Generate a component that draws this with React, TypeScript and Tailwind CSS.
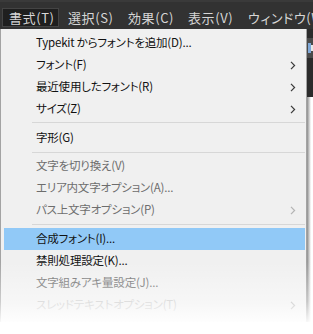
import React from 'react'

type Item = {
  label: string
  disabled?: boolean
  faint?: boolean
  sub?: boolean
  active?: boolean
}

const barItems = ['書式(T)', '選択(S)', '効果(C)', '表示(V)', 'ウィンドウ(W)']

function Chevron({ color }: { color: string }) {
  return (
    <svg width="6" height="9" viewBox="0 0 6 9" className="shrink-0">
      <path d="M1 0.8 L4.6 4.5 L1 8.2" fill="none" stroke={color} strokeWidth="1.2" />
    </svg>
  )
}

function Row({ item }: { item: Item }) {
  const color = item.faint ? 'text-[#c4c4c4]' : item.disabled ? 'text-[#6d6d6d]' : 'text-[#111111]'
  return (
    <div
      className={`h-[22px] flex items-center pl-[32px] pr-[9px] ${item.active ? 'bg-[#91c9f7]' : ''}`}
    >
      <span className={`flex-1 text-[11.5px] tracking-[-0.2px] leading-none whitespace-nowrap ${color}`}>
        {item.label}
      </span>
      {item.sub && <Chevron color={item.faint || item.disabled ? '#b4b4b4' : '#3a3a3a'} />}
    </div>
  )
}

function Separator({ top, bottom }: { top: string; bottom: string }) {
  return <div className={`${top} ${bottom} ml-[28px] h-px bg-[#d7d7d7]`} />
}

export default function App() {
  return (
    <div className="relative w-[313px] h-[334px] overflow-hidden bg-white font-['Noto_Sans_CJK_JP','Noto_Sans',sans-serif] [font-feature-settings:'palt']">
      {/* menu bar */}
      <div className="h-[29px] bg-[#323232] border-t-2 border-[#3a3a3a] flex items-start pt-[6px] pl-[3px] gap-[3px]">
        {barItems.map((label, i) => (
          <div
            key={label}
            className={`h-[19px] w-[57px] shrink-0 pl-[6px] flex items-center text-[13px] tracking-[0.6px] leading-none whitespace-nowrap text-[#d6d6d6] ${
              i === 0 ? 'bg-[#1f1f1f] border border-[#444444] -ml-px' : ''
            }`}
          >
            {label}
          </div>
        ))}
      </div>

      <div className="flex">
        {/* dropdown */}
        <div className="w-[307px] shrink-0 bg-[#f0f0f0] border-l border-r border-[#a3a3a3] pt-[3px] pl-[3px] pr-px pb-[6px]">
          <Row item={{ label: 'Typekit からフォントを追加(D)...' }} />
          <Row item={{ label: 'フォント(F)', sub: true }} />
          <Row item={{ label: '最近使用したフォント(R)', sub: true }} />
          <Row item={{ label: 'サイズ(Z)', sub: true }} />
          <Separator top="mt-[2px]" bottom="mb-[4px]" />
          <Row item={{ label: '字形(G)' }} />
          <Separator top="mt-[3px]" bottom="mb-[2px]" />
          <Row item={{ label: '文字を切り換え(V)', disabled: true }} />
          <Row item={{ label: 'エリア内文字オプション(A)...', disabled: true }} />
          <Row item={{ label: 'パス上文字オプション(P)', disabled: true, sub: true }} />
          <Separator top="mt-[3px]" bottom="mb-[3px]" />
          <Row item={{ label: '合成フォント(I)...', active: true }} />
          <Row item={{ label: '禁則処理設定(K)...' }} />
          <Row item={{ label: '文字組みアキ量設定(J)...', disabled: true }} />
          <Row item={{ label: 'スレッドテキストオプション(T)', faint: true, sub: true }} />
        </div>

        {/* what shows beside the menu */}
        <div className="flex-1 flex flex-col">
          <div className="h-[68px] bg-[#2b2b2b] pt-[9px]">
            <div className="h-[20px] bg-[#4a4a4a] flex items-center pl-px">
              <div className="w-[3px] h-[10px] bg-[#7fa8d8]" />
              <div className="w-[2px] h-[6px] bg-[#e8e8e8]" />
            </div>
          </div>
          <div className="flex-1 h-[260px] bg-[linear-gradient(to_right,#8c8c8c_0px,#c6c6c6_2px,#ffffff_4px)]" />
        </div>
      </div>

      {/* fade to white at the bottom */}
      <div className="absolute left-0 right-0 top-[262px] bottom-0 bg-[linear-gradient(to_bottom,rgba(255,255,255,0)_0%,rgba(255,255,255,0.45)_55%,#ffffff_88%)]" />
    </div>
  )
}
